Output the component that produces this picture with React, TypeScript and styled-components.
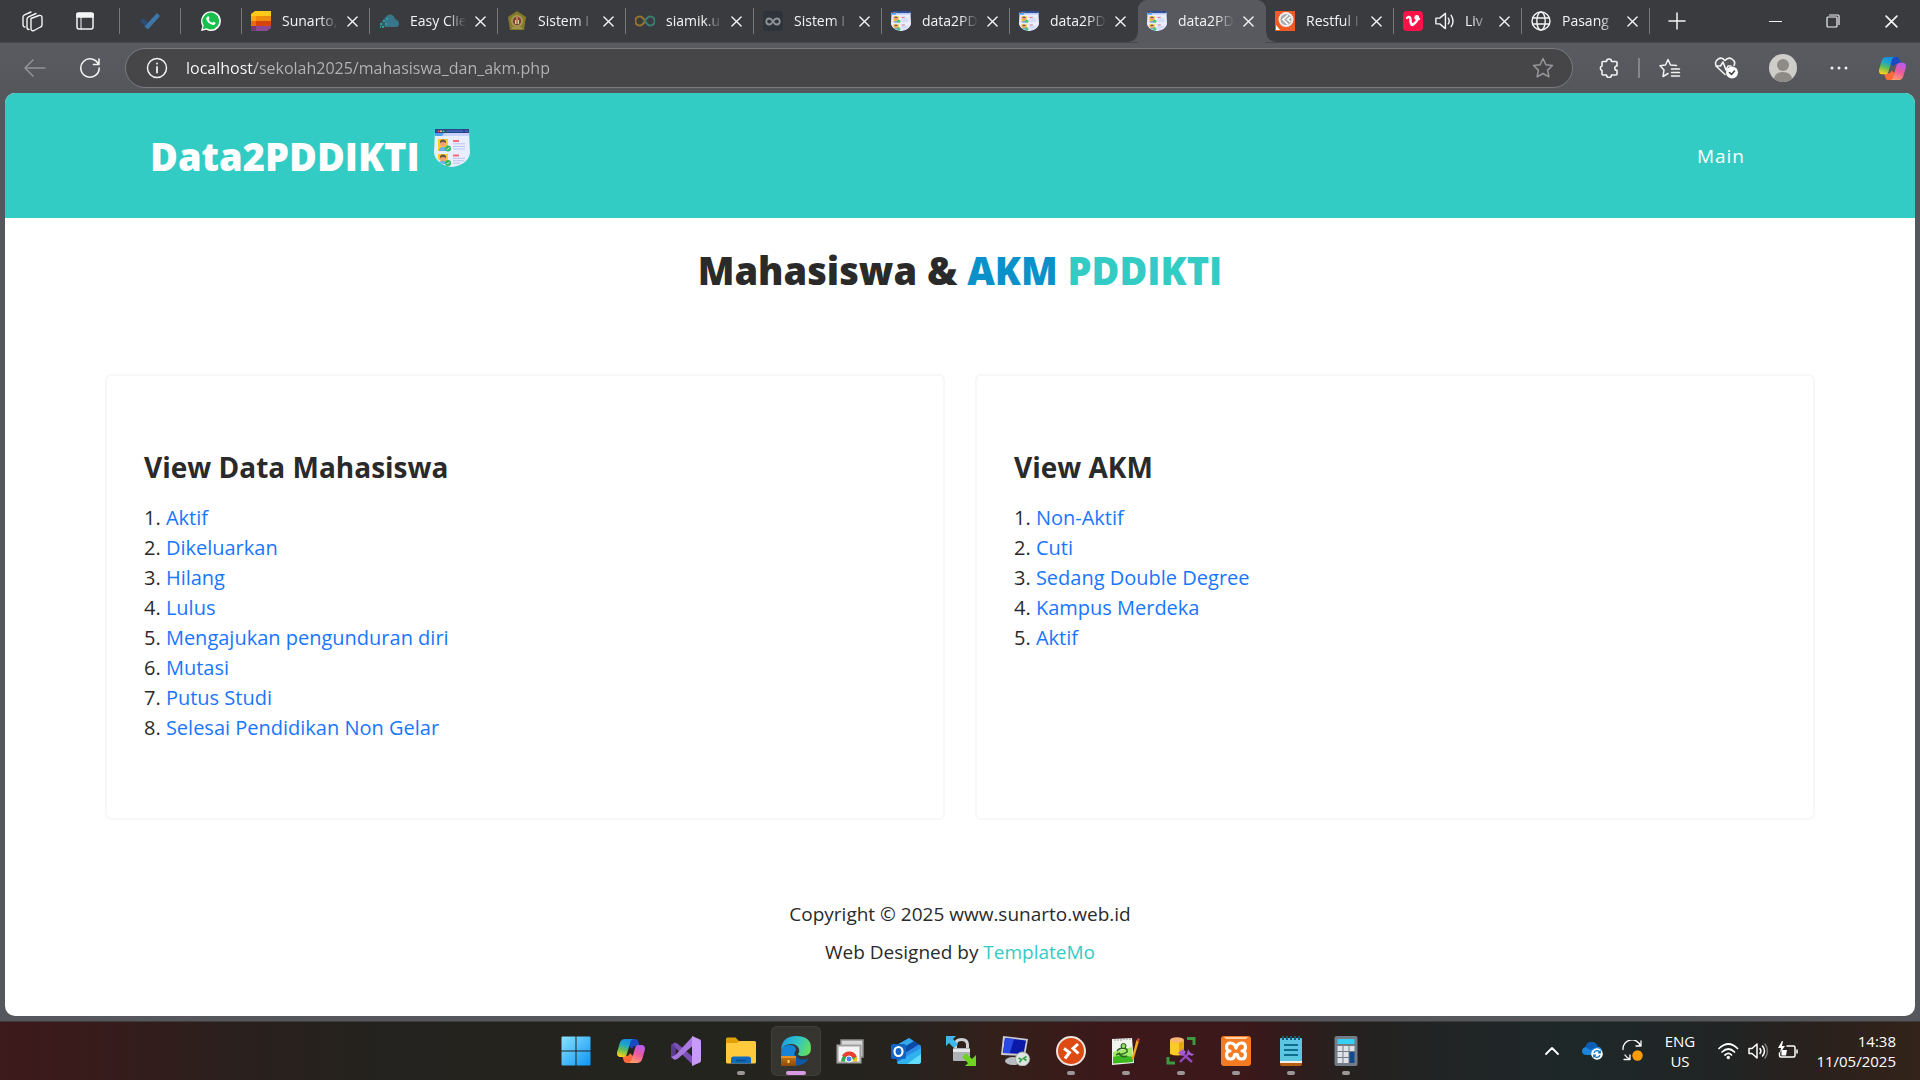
import React from "react";
import styled, { createGlobalStyle, css } from "styled-components";

const teal = "#33ccc5";
const ui = `"Segoe UI", "Open Sans", "Noto Sans", sans-serif`;

const GlobalStyle = createGlobalStyle`
  *, *::before, *::after { box-sizing: border-box; }
  body { margin: 0; background: #56575c; font-family: "Open Sans", sans-serif; }
  button { font: inherit; color: inherit; background: none; border: 0; padding: 0; cursor: pointer; }
  svg { display: block; flex: none; }
`;

const Shell = styled.div`
  display: flex;
  flex-direction: column;
  min-height: 100vh;
  background: #56575c;
`;

/* ---------- tab strip ---------- */
const TabStrip = styled.header`
  display: flex;
  height: 43px;
  background: #3a3b3f;
  color: #f4f4f4;
  font: 14px/20px ${ui};
  box-shadow: inset 0 -1px #46474b;
`;
const StripButton = styled.button<{ $w: number }>`
  display: flex;
  align-items: center;
  justify-content: center;
  width: ${(p) => p.$w}px;
  height: 42px;
`;
const Divider = styled.span<{ $gap?: number }>`
  width: 1px;
  height: 26px;
  margin: 8px 0 8px ${(p) => p.$gap ?? 0}px;
  background: #77787c;
`;
const Tabs = styled.nav`
  display: flex;
  flex: 0 1 1408px;
  min-width: 0;
`;
const TabBox = styled.div<{ $active?: boolean; $line?: boolean }>`
  position: relative;
  display: flex;
  align-items: center;
  flex: 1 1 0;
  min-width: 0;
  height: 42px;
  padding: 0 8px 0 9px;
  ${(p) =>
    p.$line &&
    css`
      &::after {
        content: "";
        position: absolute;
        right: 0;
        top: 8px;
        width: 1px;
        height: 26px;
        background: #77787c;
      }
    `}
  ${(p) =>
    p.$active &&
    css`
      border-radius: 9px 9px 0 0;
      background: #58595f;
      box-shadow: 0 1px #58595f;
      &::before,
      &::after {
        content: "";
        position: absolute;
        bottom: 0;
        width: 9px;
        height: 9px;
      }
      &::before {
        left: -9px;
        background: radial-gradient(circle at 0 0, transparent 8px, #58595f 9px);
      }
      &::after {
        right: -9px;
        background: radial-gradient(circle at 100% 0, transparent 8px, #58595f 9px);
      }
    `}
`;
const TabButton = styled.button`
  display: flex;
  align-items: center;
  gap: 11px;
  flex: 1;
  min-width: 0;
  height: 100%;
`;
const TabText = styled.span`
  flex: 1;
  min-width: 0;
  white-space: nowrap;
  text-align: left;
  mask-image: linear-gradient(90deg, #000 calc(100% - 22px), transparent calc(100% - 4px));
`;
const CloseButton = styled.button`
  display: flex;
  align-items: center;
  justify-content: center;
  width: 20px;
  height: 24px;
`;
const WindowButtons = styled.div`
  display: flex;
  margin-left: auto;
`;

/* ---------- toolbar ---------- */
const Toolbar = styled.div`
  display: flex;
  align-items: center;
  height: 50px;
  background: linear-gradient(#5a5b61, #55565a);
  color: #f2f2f2;
`;
const ToolButton = styled.button<{ $w: number }>`
  display: flex;
  align-items: center;
  justify-content: center;
  flex: none;
  width: ${(p) => p.$w}px;
  height: 40px;
`;
const ToolDivider = styled.span`
  width: 2px;
  height: 20px;
  margin: 0 1px 0 3px;
  background: #85868a;
`;
const AddressBar = styled.label`
  display: flex;
  align-items: center;
  flex: 1;
  min-width: 0;
  height: 40px;
  margin: 0 10px 0 15px;
  border: 1px solid #7a7b80;
  border-radius: 20px;
  background: #464649;
  padding: 0 18px 0 20px;
`;
const AddressInput = styled.input`
  flex: 1;
  min-width: 0;
  margin-left: 18px;
  height: 30px;
  border: 0;
  padding: 0;
  outline: 0;
  font: 16px/30px ${ui};
  color: #b4b4b7;
  -webkit-text-fill-color: transparent;
  background: linear-gradient(90deg, #fff 69px, #b4b4b7 69px);
  background-clip: text;
`;

/* ---------- page ---------- */
const Page = styled.main`
  flex: 1;
  margin: 0 5px 5px;
  border-radius: 10px;
  overflow: hidden;
  background: #fff;
  color: #2a2a2a;
`;
const Banner = styled.div`
  display: flex;
  align-items: center;
  justify-content: space-between;
  height: 125px;
  padding: 0 170px 0 145px;
  background: ${teal};
  color: #fff;
`;
const Brand = styled.a`
  display: flex;
  gap: 14px;
  color: #fff;
  text-decoration: none;
  font-size: 38px;
  line-height: 54px;
  font-weight: 800;
`;
const NavLink = styled.a`
  color: #fff;
  text-decoration: none;
  font-size: 19px;
  line-height: 30px;
  letter-spacing: 1px;
`;
const Title = styled.h1`
  margin: 29px 0 81px;
  text-align: center;
  font-size: 38px;
  line-height: 46px;
  font-weight: 800;
`;
const Blue = styled.em`
  font-style: normal;
  color: #0a91c9;
`;
const Teal = styled.span`
  color: ${teal};
`;
const Cards = styled.div`
  display: grid;
  grid-template-columns: 1fr 1fr;
  gap: 30px;
  padding: 0 100px;
`;
const Card = styled.section`
  border: 2px solid #f7f7f7;
  border-radius: 6px;
  padding: 74px 37px 75px;
`;
const CardTitle = styled.h2`
  margin: 0 0 19px;
  font-size: 28px;
  line-height: 34px;
  font-weight: 700;
`;
const List = styled.ol`
  margin: 0;
  padding: 0;
  list-style: none;
  font-size: 20px;
  line-height: 30px;
`;
const ListLink = styled.a`
  color: #1976ff;
  text-decoration: none;
`;
const Footer = styled.footer`
  padding: 79px 0 36px;
  text-align: center;
  font-size: 19px;
  line-height: 30px;
`;
const FooterLine = styled.p`
  margin: 0 0 8px;
`;
const FooterLink = styled.a`
  color: ${teal};
  text-decoration: none;
`;

/* ---------- taskbar ---------- */
const Taskbar = styled.footer`
  display: grid;
  grid-template-columns: 1fr auto 1fr;
  align-items: center;
  height: 59px;
  color: #fff;
  background: linear-gradient(
    90deg,
    #3d1a1b 0%, #391b1b 4%, #2b201d 12%, #24231f 20%, #24241f 38%, #26231f 47%,
    #34201a 52%, #3c181a 58%, #3b181a 65%, #25211f 70%, #212526 76%, #1e2829 82%,
    #212424 90%, #2b211c 95%, #33231a 100%
  );
  box-shadow: inset 0 1px #3c3c3c;
`;
const Apps = styled.div`
  grid-column: 2;
  display: flex;
`;
const AppButton = styled.button<{ $state?: "open" | "active" }>`
  position: relative;
  display: flex;
  align-items: center;
  justify-content: center;
  width: 50px;
  height: 50px;
  margin: 0 2px 0 3px;
  border-radius: 6px;
  ${(p) =>
    p.$state === "active" &&
    css`
      background: rgba(255, 255, 255, 0.08);
      box-shadow: inset 0 0 0 1px rgba(255, 255, 255, 0.05);
    `}
  ${(p) =>
    p.$state &&
    css`
      &::after {
        content: "";
        position: absolute;
        left: 50%;
        bottom: 1px;
        transform: translateX(-50%);
        width: ${p.$state === "active" ? 20 : 8}px;
        height: 4px;
        border-radius: 2px;
        background: ${p.$state === "active" ? "#d899e0" : "#9b9797"};
      }
    `}
`;
const Tray = styled.div`
  display: flex;
  align-items: center;
  justify-content: flex-end;
  padding-right: 24px;
  font: 15px/20px ${ui};
`;
const TrayButton = styled.button<{ $w: number }>`
  display: flex;
  align-items: center;
  justify-content: center;
  width: ${(p) => p.$w}px;
  height: 48px;
  line-height: 20px;
`;
const Status = styled(TrayButton)`
  margin-left: 4px;
`;
const Clock = styled.time`
  width: 92px;
  text-align: right;
  white-space: nowrap;
`;

/* ---------- drawings ---------- */
const line = { fill: "none", stroke: "currentColor", strokeWidth: 1.5, strokeLinecap: "round", strokeLinejoin: "round" } as const;

const CloseX = ({ size = 11 }: { size?: number }) => (
  <svg width={size} height={size} viewBox="0 0 12 12" {...line}><path d="M1 1l10 10M11 1L1 11" /></svg>
);

const Shield = ({ w = 20, h = 20 }: { w?: number; h?: number }) => (
  <svg width={w} height={h} viewBox="0 0 36 38" preserveAspectRatio="none">
    <path d="M1 2h34l1 22c-1 8-9 13-18 14C9 37 1 32 0 24z" fill="#e9eefd" />
    <path d="M1 4h34v3H1z" fill="#c9d2fb" />
    <path d="M1 0h34v4H1z" fill="#26478f" /><path d="M1 4h9l-2 3H1z" fill="#4aa3f5" />
    <circle cx="4.500" cy="2.200" r="1" fill="#f2545b" /><circle cx="7" cy="2.200" r="1" fill="#ffd23c" /><circle cx="9.500" cy="2.200" r="1" fill="#4cc777" />
    <path d="M12 2.200h17M31 2.200h3" stroke="#4a6ec0" strokeWidth="1.200" />
    <path d="M4 10h10v12H4zM4 25h10v11Q8 34 4 30z" fill="#ffcb2e" />
    <circle cx="9" cy="14.500" r="3" fill="#f2a172" /><circle cx="9" cy="29.500" r="3" fill="#f2a172" />
    <path d="M6 14q-.5-3.500 3-3.500t3 3.500q-3-2-6 0zM6 29q-.5-3.500 3-3.500t3 3.500q-3-2-6 0z" fill="#6a5348" />
    <path d="M5 22q0-4 4-4t4 4zM5 33q1-1 4-1t4 3H9z" fill="#6bb0ee" />
    <circle cx="14" cy="19.500" r="3" fill="#2dbb65" /><circle cx="14" cy="34" r="3" fill="#2dbb65" />
    <path d="M12.600 19.500l1 1 2-2M12.600 34l1 1 2-2" stroke="#fff" strokeWidth=".8" fill="none" />
    <path d="M19 12h6M19 26.500h6" stroke="#f76b7c" strokeWidth="1.800" />
    <path d="M19 14.800h12M19 17.500h12M19 20h12M19 29.300h12M19 31.800h11M19 34.200h7" stroke="#b9c4f2" />
  </svg>
);

const Copilot = ({ size, id }: { size: number; id: string }) => (
  <svg width={size} height={size} viewBox="0 0 30 30">
    <defs>
      <linearGradient id={id + "a"} x1=".6" y1="0" x2=".3" y2="1"><stop offset="0" stopColor="#128fe0" /><stop offset=".35" stopColor="#22a6c8" /><stop offset=".62" stopColor="#5fbf57" /><stop offset="1" stopColor="#ffd21c" /></linearGradient>
      <linearGradient id={id + "b"} x1=".7" y1="0" x2=".3" y2="1"><stop offset="0" stopColor="#b45cf0" /><stop offset=".5" stopColor="#ee5b9b" /><stop offset="1" stopColor="#ffa06b" /></linearGradient>
    </defs>
    <path d="M13 3h6c2 0 3 1 3.500 3l1.200 4h-4c-2 0-3 1-3.600 3L13 10z" fill="#1b49c4" />
    <path d="M17 27h-6c-2 0-3-1-3.500-3l-1.200-4h4c2 0 3-1 3.600-3l3.100 3z" fill="#ff6a39" />
    <path d="M9 3h9c-2 0-3 1-3.600 3l-3.500 12c-.6 2-1.600 3-3.600 3H4.500C1.500 21 .5 18.500 1.300 15.500L3.800 7C4.600 4.300 6.500 3 9 3z" fill={`url(#${id}a)`} />
    <path d="M21 27h-9c2 0 3-1 3.600-3l3.500-12c.6-2 1.600-3 3.600-3h2.800c3 0 4 2.500 3.200 5.500L26.200 23c-.8 2.700-2.700 4-5.200 4z" fill={`url(#${id}b)`} />
  </svg>
);

const SpeakerShape = () => <path d="M2 8h4l6-5v16l-6-5H2zM15 8q2 3 0 6M18 5q4 6 0 12" />;

const favicons: Record<string, React.ReactNode> = {
  stack: (
    <svg width="20" height="20" viewBox="0 0 20 20">
      <path d="M4 0h16v5H0V3z" fill="#ffc917" /><path d="M0 5h20v5H0z" fill="#f08c0c" /><path d="M0 10h20v5H0z" fill="#d8430b" /><path d="M0 15h20v2l-4 3H0z" fill="#8d4a94" />
      <path d="M0 5h5v5H0z" fill="#ffa813" /><path d="M0 10h5v5H0z" fill="#ee6a12" /><path d="M0 15h5v5H0z" fill="#7a3470" />
    </svg>
  ),
  cloud: (
    <svg width="20" height="20" viewBox="0 0 20 20">
      <path d="M6 16V9q0-5 5-5.500 4 0 5 4.500 4 1 4 5 0 3-3 3z" fill="#38768c" />
      <path d="M3 10l3-4 3 4-2 6H1v-3z" fill="#38768c" opacity=".55" />
      <path d="M1 12h2v2H1zM3 15h2v2H3zM4 9h2v2H4zM6 12h2v2H6zM1 15h1v2H1zM7 7h2v2H7z" fill="#2f9d98" />
    </svg>
  ),
  crest: (
    <svg width="20" height="20" viewBox="0 0 20 20">
      <path d="M10 0l9 6-2 13H3L1 6z" fill="#857a28" /><circle cx="10" cy="10" r="6" fill="#a59a58" /><circle cx="10" cy="10" r="4.200" fill="#8b3b35" /><path d="M10 6v7M8.500 9v4M11.500 9v4" stroke="#d5cc8d" /><path d="M5 17h10" stroke="#b9b07a" />
    </svg>
  ),
  infinity: (
    <svg width="20" height="20" viewBox="0 0 20 20" fill="none" strokeWidth="2.200">
      <path d="M10 10C8 6.500 6.500 5.500 4.800 5.500a4.500 4.500 0 000 9C6.500 14.500 8 13.500 10 10" stroke="#98722f" />
      <path d="M10 10c2-3.500 3.500-4.500 5.200-4.500a4.500 4.500 0 010 9C13.500 14.500 12 13.500 10 10" stroke="#3b7c73" />
    </svg>
  ),
  infinityBox: (
    <svg width="20" height="20" viewBox="0 0 20 20" fill="none">
      <rect width="20" height="20" rx="2" fill="#2e353a" />
      <path d="M10 10.500c-1.500-2.500-2.500-3-3.700-3a3 3 0 000 6c1.200 0 2.200-.5 3.700-3s2.500-3 3.700-3a3 3 0 010 6c-1.200 0-2.200-.5-3.700-3z" stroke="#8f9396" strokeWidth="1.800" />
    </svg>
  ),
  shield: <Shield />,
  rest: (
    <svg width="20" height="20" viewBox="0 0 20 20">
      <path d="M0 0h20v20H0z" fill="#f15a24" /><circle cx="11" cy="8.500" r="7.500" fill="#efefef" /><circle cx="11" cy="8.500" r="5.500" fill="#aaa" />
      <path d="M13 4L8 8.500l5 5M15.500 6l-3 2.500 3 2.500" fill="none" stroke="#fff" strokeWidth="1.600" /><path d="M1 14l4 5H1z" fill="#fff" />
    </svg>
  ),
  vid: (
    <svg width="20" height="20" viewBox="0 0 20 20">
      <rect width="20" height="20" rx="4" fill="#fb1248" />
      <path d="M4 7c2-2 3.500-1 3.500 1.500 0 2 .3 4.500 1.500 5.500 3-1 6-5 6-7.500 0-2-2.500-1.500-2.500.3 0 1.400 1.500 2 3.500 1.200" fill="none" stroke="#fff" strokeWidth="2.400" strokeLinecap="round" />
    </svg>
  ),
  globe: (
    <svg width="20" height="20" viewBox="0 0 20 20" {...line} strokeWidth="1.400">
      <circle cx="10" cy="10" r="9" /><ellipse cx="10" cy="10" rx="4.200" ry="9" /><path d="M1.500 7h17M1.500 13h17" />
    </svg>
  ),
};

const tabs = [
  { icon: "stack", label: "Sunarto," },
  { icon: "cloud", label: "Easy Clie" },
  { icon: "crest", label: "Sistem I" },
  { icon: "infinity", label: "siamik.u" },
  { icon: "infinityBox", label: "Sistem I" },
  { icon: "shield", label: "data2PD" },
  { icon: "shield", label: "data2PD" },
  { icon: "shield", label: "data2PD", active: true },
  { icon: "rest", label: "Restful I" },
  { icon: "vid", label: "Liv", sound: true },
  { icon: "globe", label: "Pasang" },
];

const box = { width: 30, height: 30, viewBox: "0 0 30 30" };

const apps: { name: string; state?: "open" | "active"; art: React.ReactNode }[] = [
  {
    name: "Start",
    art: (
      <svg {...box}>
        <defs><linearGradient id="win" x1="0" y1="0" x2="1" y2="1"><stop offset="0" stopColor="#8be3ff" /><stop offset="1" stopColor="#0a94f5" /></linearGradient></defs>
        <path d="M1.500.5h13v14H.5v-13a1 1 0 011-1zM15.500.5h13a1 1 0 011 1v13h-14zM.5 15.500h14v14h-13a1 1 0 01-1-1zM15.500 15.500h14v13a1 1 0 01-1 1h-13z" fill="url(#win)" />
      </svg>
    ),
  },
  { name: "Copilot", art: <Copilot size={30} id="task" /> },
  {
    name: "Visual Studio",
    art: (
      <svg {...box}>
        <path d="M0 9l3.500-2.500L7 8l-2.500 3v9L0 21z" fill="#6a44a0" />
        <path d="M3.500 6.500L7 8l16 14v8L3 10.500z" fill="#7b4fb5" />
        <path d="M0 21V9l4.500 2v8z" fill="#5b3a94" />
        <path d="M0 21l3 2.500q2 .5 4-1L22 9.500V0L4.500 19z" fill="#a878e0" />
        <path d="M21 0l8 3.500q1 .5 1 2v19q0 1.500-1 2L21 30z" fill="#c79bf7" />
      </svg>
    ),
  },
  {
    name: "File Explorer",
    state: "open",
    art: (
      <svg {...box}>
        <path d="M0 3q0-1.500 1.500-1.500h8L13 5H28v8H0z" fill="#e0a106" />
        <path d="M0 7h11l3-2h14.500Q30 5 30 6.500V26q0 1.500-1.500 1.500h-27Q0 27.500 0 26z" fill="#ffcb3d" />
        <path d="M5 27.500V23q0-2.500 2.500-2.500h15Q25 20.500 25 23v4.500z" fill="#0f6cbd" /><path d="M10 24.500h10" stroke="#0a4a86" strokeWidth="1.500" />
      </svg>
    ),
  },
  {
    name: "Edge",
    state: "active",
    art: (
      <svg {...box}>
        <defs>
          <linearGradient id="edge" x1="0" y1=".3" x2="1" y2=".6"><stop offset="0" stopColor="#1c9fdf" /><stop offset=".5" stopColor="#2fc4c9" /><stop offset="1" stopColor="#66df5b" /></linearGradient>
          <linearGradient id="case" x1="0" y1="0" x2="0" y2="1"><stop offset="0" stopColor="#c97712" /><stop offset="1" stopColor="#8d4a08" /></linearGradient>
        </defs>
        <path d="M0 14v10q4 5 12 6 12 0 16-8-6 3-11 0-5-4-2-8z" fill="#0c59a4" />
        <path d="M0 16Q1 9 8 9q7 0 7 5-4 4 0 9l-5 7Q0 26 0 16z" fill="#1483d8" />
        <path d="M0 14Q1 0 15 0q15 0 15 12 0 8-8 8-5 0-5-2 2-2 1-5-2-5-8-5-7 0-10 6z" fill="url(#edge)" />
        <path d="M0 20h15v10H0z" fill="url(#case)" /><path d="M0 20h15v2H0z" fill="#e49425" /><path d="M6.500 24h2v3h-2z" fill="#ffd45a" />
      </svg>
    ),
  },
  {
    name: "Chrome Remote Desktop",
    art: (
      <svg {...box}>
        <rect x="5" y="4" width="22" height="17" fill="#d8d8d8" stroke="#8d8d8d" strokeWidth="1.500" />
        <rect x="1.500" y="9.500" width="23" height="17" fill="#f5f5f5" stroke="#a1a1a1" strokeWidth="2" />
        <path d="M5 25.500a8 8 0 0116 0z" fill="#33a853" /><path d="M6 20a8 8 0 0115 1.500h-8z" fill="#e8402f" /><path d="M21 20.500q1 3-.3 5H15z" fill="#fcc31e" />
        <path d="M9 25.500a4 4 0 018 0z" fill="#fff" /><circle cx="13" cy="23" r="3" fill="#4285f4" stroke="#fff" />
      </svg>
    ),
  },
  {
    name: "Outlook",
    art: (
      <svg {...box}>
        <path d="M4 10L18 2l12 8v15q0 3-3 3H9q-3 0-3-2z" fill="#1a6fd0" />
        <path d="M6 9L18 2l6 4L9 14z" fill="#35a9ee" /><path d="M10 13l13-8 5 3.500L14 18z" fill="#0d4aa5" /><path d="M14 17l14-8.500 2 1.500v4L14 22z" fill="#2b8be6" />
        <path d="M6 26L30 12v13q0 3-3 3H9q-3 0-3-2z" fill="#2fb2ee" /><path d="M16 28l14-10v7q0 3-3 3z" fill="#63dcfa" />
        <rect x="0" y="8" width="15" height="15" rx="2" fill="#0f64c4" /><ellipse cx="7.500" cy="15.500" rx="4" ry="4.500" fill="none" stroke="#fff" strokeWidth="2.200" />
      </svg>
    ),
  },
  {
    name: "WinSCP",
    art: (
      <svg {...box}>
        <path d="M9.500 14V9q0-5.500 6-5.500t6 5.500v5" fill="none" stroke="#cfd2d4" strokeWidth="3" />
        <rect x="7" y="12" width="17" height="13" rx="1" fill="#aeb2b5" /><path d="M7 13h17v3H7z" fill="#e4e6e7" />
        <path d="M0 0h10L7 3l5 5-4 4-5-5-3 3z" fill="#3db8ec" /><path d="M30 30H19l3-3-6-6 4-4 6 6 4-4z" fill="#71d321" />
      </svg>
    ),
  },
  {
    name: "PuTTY",
    art: (
      <svg {...box}>
        <ellipse cx="12" cy="25" rx="8" ry="4" fill="#b9bcc0" />
        <path d="M2 0l25 3-3 17L0 19z" fill="#c9cbd1" /><path d="M4 2l21 2.500-2.500 13.500L2 17z" fill="#0b19a8" /><path d="M4 2l9 1-4 14-7 0z" fill="#2949e0" />
        <circle cx="21.500" cy="23" r="7" fill="#dfe3df" stroke="#a7aba7" /><path d="M17.500 22l3 1.500-2 3M25.500 20.500l-3 2 3 2" fill="none" stroke="#36a04a" strokeWidth="1.700" />
      </svg>
    ),
  },
  {
    name: "Remote Desktop",
    state: "open",
    art: (
      <svg {...box}>
        <circle cx="15" cy="15" r="14" fill="#dd4a14" stroke="#ece5e0" strokeWidth="2" />
        <path d="M8 12.500l5.500 4L9 22.500M22 8l-5 4.500 5.500 5" fill="none" stroke="#fff" strokeWidth="3" />
      </svg>
    ),
  },
  {
    name: "Notepad++",
    state: "open",
    art: (
      <svg {...box}>
        <path d="M1 3l20-1 2 25-22 2z" fill="#f1f3ee" /><path d="M2 16l19-5 1 15-20 1.500z" fill="#a6e86a" /><path d="M2 21q8-3 20 0v5L2 27.500z" fill="#3fb822" />
        <path d="M6 15q2-3 7-3 4 1 3 4-4 3-8 2 3 4 8 2M5 19l4-2" fill="none" stroke="#2b6a24" strokeWidth="1.500" /><circle cx="12.500" cy="10" r="2.500" fill="#8fe05b" stroke="#234d1e" />
        <path d="M4 3v2M7 3v2M10 3v2M13 2v2M16 2v2M19 2v2" stroke="#999" /><path d="M25.500 4l2.500 1-5 17-2 2v-3z" fill="#f3a51c" /><path d="M26.500 2l2.500 1-1 3-2.500-1z" fill="#c0453a" />
      </svg>
    ),
  },
  {
    name: "SQL Server Management Studio",
    state: "open",
    art: (
      <svg {...box}>
        <path d="M4 4h14v14q-7 3-14 0z" fill="#fcc92b" /><path d="M13 4h5v14l-5 1z" fill="#e5a70e" /><ellipse cx="11" cy="4" rx="7" ry="2.800" fill="#f9b471" />
        <path d="M21 2.500h7V9M2 21v6h7" fill="none" stroke="#3d9a43" strokeWidth="3" />
        <path d="M14 26l10-10M17 18l9 8" stroke="#9347c0" strokeWidth="2.400" /><path d="M12 17l5-4 3 3-4 4zM22 13l2 4 4 1-2 2-5-2z" fill="#a65bd3" />
      </svg>
    ),
  },
  {
    name: "XAMPP",
    state: "open",
    art: (
      <svg {...box}>
        <rect width="30" height="30" rx="3" fill="#f47b22" /><path d="M3 1h24l-2 2H5z" fill="#ffd2a8" />
        <path d="M15 12c1-3.500 3-5 5.500-5s4 1.500 4 4-1.500 4-3.500 4c2 0 3.500 1.500 3.500 4s-1.500 4-4 4-4-1-4-4c0-1-3-1-3 0 0 3-1.500 4-4 4s-4-1.500-4-4 1.500-4 3.500-4c-2 0-3.500-1.500-3.500-4s1.500-4 4-4 4.500 1.500 5.500 5z" fill="none" stroke="#fff" strokeWidth="3.200" strokeLinejoin="round" />
      </svg>
    ),
  },
  {
    name: "Notepad",
    state: "open",
    art: (
      <svg {...box}>
        <path d="M4 26h22v2q0 2-2 2H6q-2 0-2-2z" fill="#b65c13" /><path d="M4 3q0-1 1-1h20q1 0 1 1v24H4z" fill="#5cc6e0" /><path d="M4 25h22v2H4z" fill="#f4efe6" />
        <path d="M8 9h14M8 14h14M8 19h14" stroke="#0c6e8c" strokeWidth="2" /><path d="M7 0v4M11 0v4M15 0v4M19 0v4M23 0v4" stroke="#0f5e7a" strokeWidth="2" />
      </svg>
    ),
  },
  {
    name: "Calculator",
    state: "open",
    art: (
      <svg {...box}>
        <rect x="3.500" width="23" height="30" rx="2" fill="#747c87" /><path d="M6.500 3h17v5h-17z" fill="#35d0f5" />
        <path d="M6.500 10h5v5h-5zM12.500 10h5v5h-5zM18.500 10h5v5h-5zM6.500 16h5v5h-5zM12.500 16h5v5h-5zM6.500 22h5v5h-5zM12.500 22h5v5h-5z" fill="#dfe3e8" /><path d="M18.500 16h5v11h-5z" fill="#124a8f" />
      </svg>
    ),
  },
];

const students = ["Aktif", "Dikeluarkan", "Hilang", "Lulus", "Mengajukan pengunduran diri", "Mutasi", "Putus Studi", "Selesai Pendidikan Non Gelar"];
const activities = ["Non-Aktif", "Cuti", "Sedang Double Degree", "Kampus Merdeka", "Aktif"];

const LinkCard = ({ title, items }: { title: string; items: string[] }) => (
  <Card>
    <CardTitle>{title}</CardTitle>
    <List>
      {items.map((item, i) => (
        <li key={item}>{i + 1}. <ListLink href="#">{item}</ListLink></li>
      ))}
    </List>
  </Card>
);

export default function App() {
  return (
    <Shell>
      <GlobalStyle />
      <TabStrip>
        <StripButton $w={64} aria-label="Workspaces">
          <svg width="21" height="21" viewBox="0 0 21 21" {...line} strokeWidth="1.400"><path d="M9 7.500l8-3q3-.5 3 2V14q0 1.500-1.500 2L12 19.500q-3 1-3-2zM5 16V8q0-1.500 1.500-2.200L14 2.500M7 18.500q-2 0-2-2.500M1 13.500V6q0-1.500 1.500-2.200L9 1M3 16q-2 0-2-2.500" /></svg>
        </StripButton>
        <StripButton $w={42} aria-label="Tab actions">
          <svg width="18" height="18" viewBox="0 0 18 18" {...line}><rect x="1" y="1" width="16" height="16" rx="2" /><path d="M1 1.500h16V5H1z" fill="currentColor" /><path d="M5 5v12" strokeWidth="1" /></svg>
        </StripButton>
        <Divider $gap={13} />
        <StripButton $w={60} aria-label="To Do">
          <svg width="20" height="17" viewBox="0 0 20 17"><path d="M0 8l3-3 5 5-3 3z" fill="#2b4d78" /><path d="M4.500 13.500L17 0l3 3L8 16.500z" fill="#3d76a8" /></svg>
        </StripButton>
        <Divider />
        <StripButton $w={60} aria-label="WhatsApp">
          <svg width="20" height="20" viewBox="0 0 20 20"><path d="M0 20l1.400-5A9.900 9.900 0 1110 20a10 10 0 01-4.800-1.300z" fill="#fff" /><path d="M1.700 18.300l1-3.700A8.400 8.400 0 1110 18.400a8 8 0 01-4.200-1.200z" fill="#17bf4c" /><path d="M6.800 5.500c.6-.4 1 0 1.200.6l.5 1.200c.1.600-.8 1-.7 1.400.8 1.500 2 2.500 3.500 3.100.5 0 .8-1.100 1.300-1l1.600.8c.5.3.3.9 0 1.400-.8 1-2.200 1.100-3.500.6-2.500-.9-4.200-2.500-5.300-4.900-.4-1.300.3-2.700 1.400-3.200z" fill="#fff" /></svg>
        </StripButton>
        <Divider />
        <Tabs aria-label="Tabs">
          {tabs.map((t, i) => (
            <TabBox key={i} $active={t.active} $line={!t.active && !tabs[i + 1]?.active}>
              <TabButton>
                {favicons[t.icon]}
                {t.sound && <svg width="20" height="22" viewBox="0 0 21 22" {...line}><SpeakerShape /></svg>}
                <TabText>{t.label}</TabText>
              </TabButton>
              <CloseButton aria-label="Close tab"><CloseX /></CloseButton>
            </TabBox>
          ))}
        </Tabs>
        <StripButton $w={54} aria-label="New tab">
          <svg width="18" height="18" viewBox="0 0 18 18" {...line}><path d="M9 1v16M1 9h16" /></svg>
        </StripButton>
        <WindowButtons>
          <StripButton $w={58} aria-label="Minimize"><svg width="13" height="13" viewBox="0 0 13 13" {...line} strokeWidth="1.200"><path d="M0 6.500h13" /></svg></StripButton>
          <StripButton $w={58} aria-label="Restore"><svg width="14" height="14" viewBox="0 0 14 14" {...line} strokeWidth="1.200"><rect x="1" y="3" width="10" height="10" rx="1" /><path d="M3.500 1H12q1 0 1 1v8.500" /></svg></StripButton>
          <StripButton $w={58} aria-label="Close"><CloseX size={13} /></StripButton>
        </WindowButtons>
      </TabStrip>

      <Toolbar>
        <ToolButton $w={70} aria-label="Back">
          <svg width="22" height="18" viewBox="0 0 22 18" {...line} stroke="#929397"><path d="M21 9H1M9 1L1 9l8 8" /></svg>
        </ToolButton>
        <ToolButton $w={40} aria-label="Reload">
          <svg width="22" height="22" viewBox="0 0 22 22" {...line} strokeWidth="1.600"><path d="M19.500 7.500A9.200 9.200 0 1020.200 11M20 2v5.500h-5.500" /></svg>
        </ToolButton>
        <AddressBar>
          <svg width="22" height="22" viewBox="0 0 22 22" {...line}><circle cx="11" cy="11" r="9.500" /><path d="M11 10v5.500M11 6.500v.2" strokeWidth="1.800" /></svg>
          <AddressInput aria-label="Address" defaultValue="localhost/sekolah2025/mahasiswa_dan_akm.php" />
          <svg width="22" height="22" viewBox="0 0 22 22" {...line} stroke="#97989b"><path d="M11 1.500l2.900 6.200 6.600.8-4.900 4.600 1.300 6.700-5.900-3.300-5.900 3.300 1.300-6.700-4.900-4.600 6.600-.8z" /></svg>
        </AddressBar>
        <ToolButton $w={52} aria-label="Extensions">
          <svg width="20" height="20" viewBox="0 0 20 20" {...line} strokeWidth="1.600"><path d="M4 3.500h3.500a2.500 2.500 0 015 0H17a1 1 0 011 1V8a2.200 2.200 0 000 4.400v3.600a1 1 0 01-1 1h-4.500a2.500 2.500 0 01-5 0H4a1 1 0 01-1-1v-3.600A2.300 2.300 0 013 8V4.500a1 1 0 011-1z" /></svg>
        </ToolButton>
        <ToolDivider />
        <ToolButton $w={58} aria-label="Favorites">
          <svg width="22" height="20" viewBox="0 0 22 20" {...line}><path d="M11.500 7L9 1.500 6.500 7l-5.500.8 4 4.200-1 6.500 5-3M11.500 7l6 .5M12.500 11h8M12.500 14.500h8M12.500 18h8" /></svg>
        </ToolButton>
        <ToolButton $w={54} aria-label="Browser essentials">
          <svg width="24" height="22" viewBox="0 0 24 22" {...line} strokeWidth="1.600"><path d="M11 17.500L2.500 9.500C-1 4 6.500-2 11 3.500 15.500-2 22.500 3.500 20 8.500M2 9h4.500L9 5l3 8 2-4h3" /><circle cx="18" cy="15.500" r="6" fill="#fff" stroke="none" /><path d="M15.500 15.500l2 2 3-3.500" stroke="#444" /></svg>
        </ToolButton>
        <ToolButton $w={60} aria-label="Profile">
          <svg width="28" height="28" viewBox="0 0 28 28"><circle cx="14" cy="14" r="14" fill="#cfcdca" /><circle cx="14" cy="11" r="6" fill="#8e8a86" /><path d="M5 24.700Q6 18 14 18t9 6.700A14 14 0 015 24.700z" fill="#8e8a86" /></svg>
        </ToolButton>
        <ToolButton $w={52} aria-label="Settings and more">
          <svg width="18" height="4" viewBox="0 0 18 4" fill="currentColor"><circle cx="2" cy="2" r="1.500" /><circle cx="9" cy="2" r="1.500" /><circle cx="16" cy="2" r="1.500" /></svg>
        </ToolButton>
        <ToolButton $w={55} aria-label="Copilot"><Copilot size={29} id="side" /></ToolButton>
      </Toolbar>

      <Page>
        <Banner>
          <Brand href="#">Data2PDDIKTI<Shield w={36} h={38} /></Brand>
          <NavLink href="#">Main</NavLink>
        </Banner>
        <Title>Mahasiswa &amp; <Blue>AKM</Blue> <Teal>PDDIKTI</Teal></Title>
        <Cards>
          <LinkCard title="View Data Mahasiswa" items={students} />
          <LinkCard title="View AKM" items={activities} />
        </Cards>
        <Footer>
          <FooterLine>Copyright © 2025 www.sunarto.web.id</FooterLine>
          <FooterLine>Web Designed by <FooterLink href="#">TemplateMo</FooterLink></FooterLine>
        </Footer>
      </Page>

      <Taskbar>
        <Apps>
          {apps.map((a) => (
            <AppButton key={a.name} $state={a.state} aria-label={a.name}>{a.art}</AppButton>
          ))}
        </Apps>
        <Tray>
          <TrayButton $w={40} aria-label="Show hidden icons"><svg width="14" height="8" viewBox="0 0 14 8" {...line} strokeWidth="1.800"><path d="M1 7l6-6 6 6" /></svg></TrayButton>
          <TrayButton $w={40} aria-label="OneDrive">
            <svg width="21" height="18" viewBox="0 0 21 18"><path d="M5 13q-5 0-5-4 0-3 3.500-4Q5 0 9.500 0t6 4.500Q20 5 20 9t-4 4z" fill="#1a86de" /><path d="M3.500 5Q5 0 9.500 0t6 4.500L8 8z" fill="#0b5cb5" /><circle cx="15" cy="12" r="5.800" fill="#fff" /><path d="M12 11a3.200 3.200 0 016-.5M18 13a3.200 3.200 0 01-6 .5M18.300 8.500v2.300H16M11.700 15.500v-2.300H14" fill="none" stroke="#1173c7" strokeWidth="1.200" /></svg>
          </TrayButton>
          <TrayButton $w={40} aria-label="Updates">
            <svg width="21" height="21" viewBox="0 0 21 21" {...line} strokeWidth="1.300"><path d="M1 9.500A9 9 0 0118.500 6M19 1v5h-5M8 19a9 9 0 01-5-4M2 19.500h6V15" /><circle cx="15.500" cy="15.500" r="5.200" fill="#ff9a0c" stroke="none" /></svg>
          </TrayButton>
          <TrayButton $w={56}>ENG<br />US</TrayButton>
          <Status $w={92} aria-label="Network, volume and battery">
            <svg width="80" height="22" viewBox="0 0 80 22" {...line}>
              <path d="M1 8.500q9.500-9 18.500 0M4 12q6.500-6 12.500 0M7 15q3.500-3.200 6.500 0" strokeWidth="1.700" /><circle cx="10.300" cy="17.500" r="1.700" fill="currentColor" stroke="none" />
              <path d="M31 8.500h3l5-4.500v14l-5-4.500h-3zM42 8.500q1.800 2.500 0 5M44.500 6q4 5 0 10" /><path d="M47 4q5 7 0 14" stroke="#777" />
              <path d="M69 6h6.500q1.500 0 1.500 1.500v8q0 1.500-1.500 1.500H63q-1.500 0-1.500-1.500V13M79 10v3" /><path d="M63.500 10h5.500l-1 5.500h-4.500zM64 1l-4 7h3l-1 5 5-7h-3l1-5z" fill="currentColor" stroke="none" />
            </svg>
          </Status>
          <Clock>14:38<br />11/05/2025</Clock>
        </Tray>
      </Taskbar>
    </Shell>
  );
}
